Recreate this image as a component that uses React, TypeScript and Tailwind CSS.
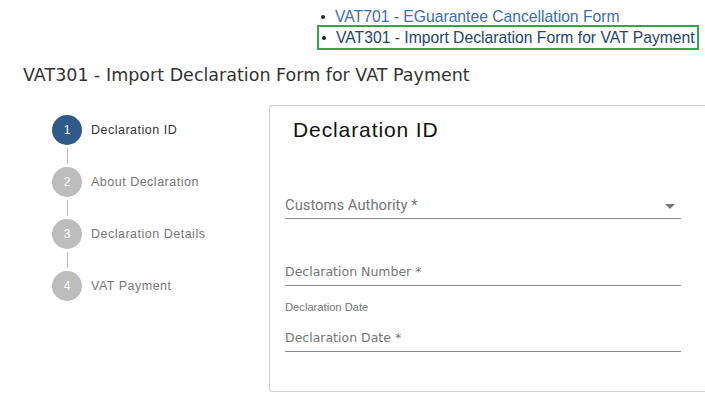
const steps = [
  { n: 1, label: "Declaration ID", active: true },
  { n: 2, label: "About Declaration" },
  { n: 3, label: "Declaration Details" },
  { n: 4, label: "VAT Payment" },
];

function Field({ label, font, select }: { label: string; font: string; select?: boolean }) {
  return (
    <div className="flex h-[24px] items-start justify-between border-b border-[#8a8a8a]">
      <span className={`leading-[20px] text-[#777] ${font}`}>{label}</span>
      {select ? <span className="mr-[6px] mt-[9px] h-0 w-0 border-x-[5px] border-t-[5px] border-x-transparent border-t-[#777]" /> : null}
    </div>
  );
}

export default function App() {
  return (
    <div className="h-[405px] w-[705px] overflow-hidden bg-white font-['Liberation_Sans',Arial,sans-serif]">
      <ul className="ml-[317px] pt-[8px]">
        <li className="flex h-[17px] items-center pl-[4px] text-[15.7px] text-[#3b70b0]">
          <span className="mr-[10px] h-[4px] w-[4px] rounded-full bg-[#222]" />
          VAT701 - EGuarantee Cancellation Form
        </li>
        <li className="flex h-[25px] w-[382px] items-center border-2 border-[#2ea84a] pl-[3px] text-[15.7px] text-[#24466f]">
          <span className="mr-[10px] h-[4px] w-[4px] rounded-full bg-[#222]" />
          VAT301 - Import Declaration Form for VAT Payment
        </li>
      </ul>

      <h1 className="mt-[15px] pl-[23px] font-['DejaVu_Sans',sans-serif] text-[17.5px] leading-[20px] text-[#333]">
        VAT301 - Import Declaration Form for VAT Payment
      </h1>

      <div className="mt-[20px] flex">
        <div className="w-[269px] shrink-0 pl-[52px] pt-[10px]">
          {steps.map((s, i) => (
            <div key={s.n}>
              <div className="flex items-center">
                <span
                  className={`flex h-[30px] w-[30px] items-center justify-center rounded-full text-[12px] text-white ${
                    s.active ? "bg-[#2f5b8a]" : "bg-[#bdbdbd]"
                  }`}
                >
                  {s.n}
                </span>
                <span
                  className={`ml-[9px] text-[12.5px] tracking-[0.5px] ${s.active ? "text-[#333]" : "text-[#777]"}`}
                >
                  {s.label}
                </span>
              </div>
              {i < steps.length - 1 ? <div className="my-[3px] ml-[14.5px] h-[16px] w-px bg-[#bdbdbd]" /> : null}
            </div>
          ))}
        </div>

        <div className="-mr-[5px] h-[287px] flex-1 rounded-l-[3px] border border-r-0 border-[#cfcfcf] pl-[15px] pr-[29px] pt-[9px]">
          <h2 className="pl-[8px] text-[21px] leading-[30px] tracking-[0.9px] text-[#111]">Declaration ID</h2>
          <div className="mt-[50px]">
            <Field label="Customs Authority *" font="font-['Roboto',sans-serif] text-[14.8px]" select />
          </div>
          <div className="mt-[43px]">
            <Field label="Declaration Number *" font="font-['DejaVu_Sans',sans-serif] text-[12.5px]" />
          </div>
          <div className="mt-[15px] text-[11.2px] leading-[12px] text-[#777]">Declaration Date</div>
          <div className="mt-[15px]">
            <Field label="Declaration Date *" font="font-['DejaVu_Sans',sans-serif] text-[12.5px]" />
          </div>
        </div>
      </div>
    </div>
  );
}
